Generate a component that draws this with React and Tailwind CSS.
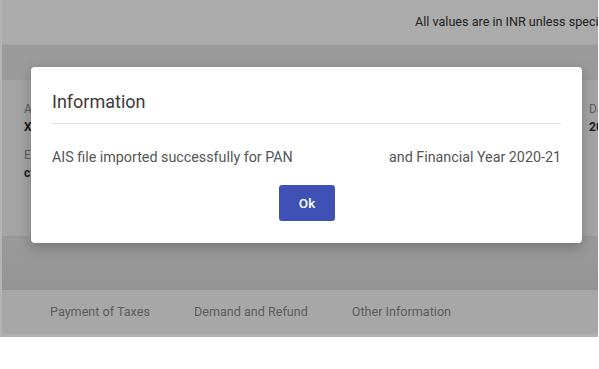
export default function App() {
  const left = [
    { label: 'AIS ID', value: 'XXXXXXXXXX' },
    { label: 'Email', value: 'cxxxxx@gmail.com' },
  ]
  return (
    <div className="relative w-[599px] h-[369px] bg-white font-['Roboto','Liberation_Sans',sans-serif] overflow-hidden">
      {/* dimmed page behind the dialog */}
      <div className="w-[598px] h-[337px] flex flex-col border-l-2 border-[#b4b4b4] bg-[#a5a5a5]">
        <div className="h-[44px] shrink-0 flex items-center pl-[413px] bg-[#ababab] text-[12.6px] text-[#222222] whitespace-nowrap overflow-hidden">
          All values are in INR unless specified
        </div>
        <div className="h-[36px] shrink-0 bg-[#9b9b9b] border-t border-[#a2a2a2]" />
        <div className="h-[156px] shrink-0 bg-[#a4a4a4] flex justify-between pl-[22px] pt-[20px] overflow-hidden">
          <div className="flex flex-col gap-[10px]">
            {left.map((f) => (
              <div key={f.label} className="flex flex-col">
                <span className="text-[12px] leading-[18px] text-[#5e5e5e]">{f.label}</span>
                <span className="text-[12px] leading-[18px] font-bold text-[#1c1c1c]">{f.value}</span>
              </div>
            ))}
          </div>
          <div className="flex flex-col w-[9px] overflow-hidden">
            <span className="text-[12px] leading-[18px] text-[#5e5e5e]">Date</span>
            <span className="text-[12px] leading-[18px] font-bold text-[#1c1c1c]">2021</span>
          </div>
        </div>
        <div className="h-[53px] shrink-0 bg-gradient-to-b from-[#9a9a9a] to-[#949494] border-t border-[#979797]" />
        <div className="h-[48px] shrink-0 flex items-center gap-[44px] pl-[48px] bg-[#a7a7a7] border-t border-[#929292] border-b-[3px] border-b-[#b0b0b0] text-[12.6px] text-[#5c5c5c]">
          <span>Payment of Taxes</span>
          <span>Demand and Refund</span>
          <span>Other Information</span>
        </div>
      </div>

      {/* dialog */}
      <div className="absolute left-[31px] top-[67px] w-[551px] h-[176px] bg-white rounded-[4px] shadow-[0_4px_14px_rgba(0,0,0,0.25)] px-[21px] flex flex-col">
        <div className="h-[57px] shrink-0 pt-[25px] border-b border-[#e2e2e2]">
          <div className="text-[18px] leading-[20px] text-[#3a3a3a]">Information</div>
        </div>
        <div className="h-[61px] shrink-0 pt-[23px] flex justify-between text-[14.3px] leading-[20px] text-[#555555]">
          <span>AIS file imported successfully for PAN</span>
          <span>and Financial Year 2020-21</span>
        </div>
        <div className="flex justify-center pl-[1px]">
          <button className="w-[56px] h-[36px] rounded-[3px] bg-[#3f51b5] text-white text-[13.5px] font-medium">
            Ok
          </button>
        </div>
      </div>
    </div>
  )
}
